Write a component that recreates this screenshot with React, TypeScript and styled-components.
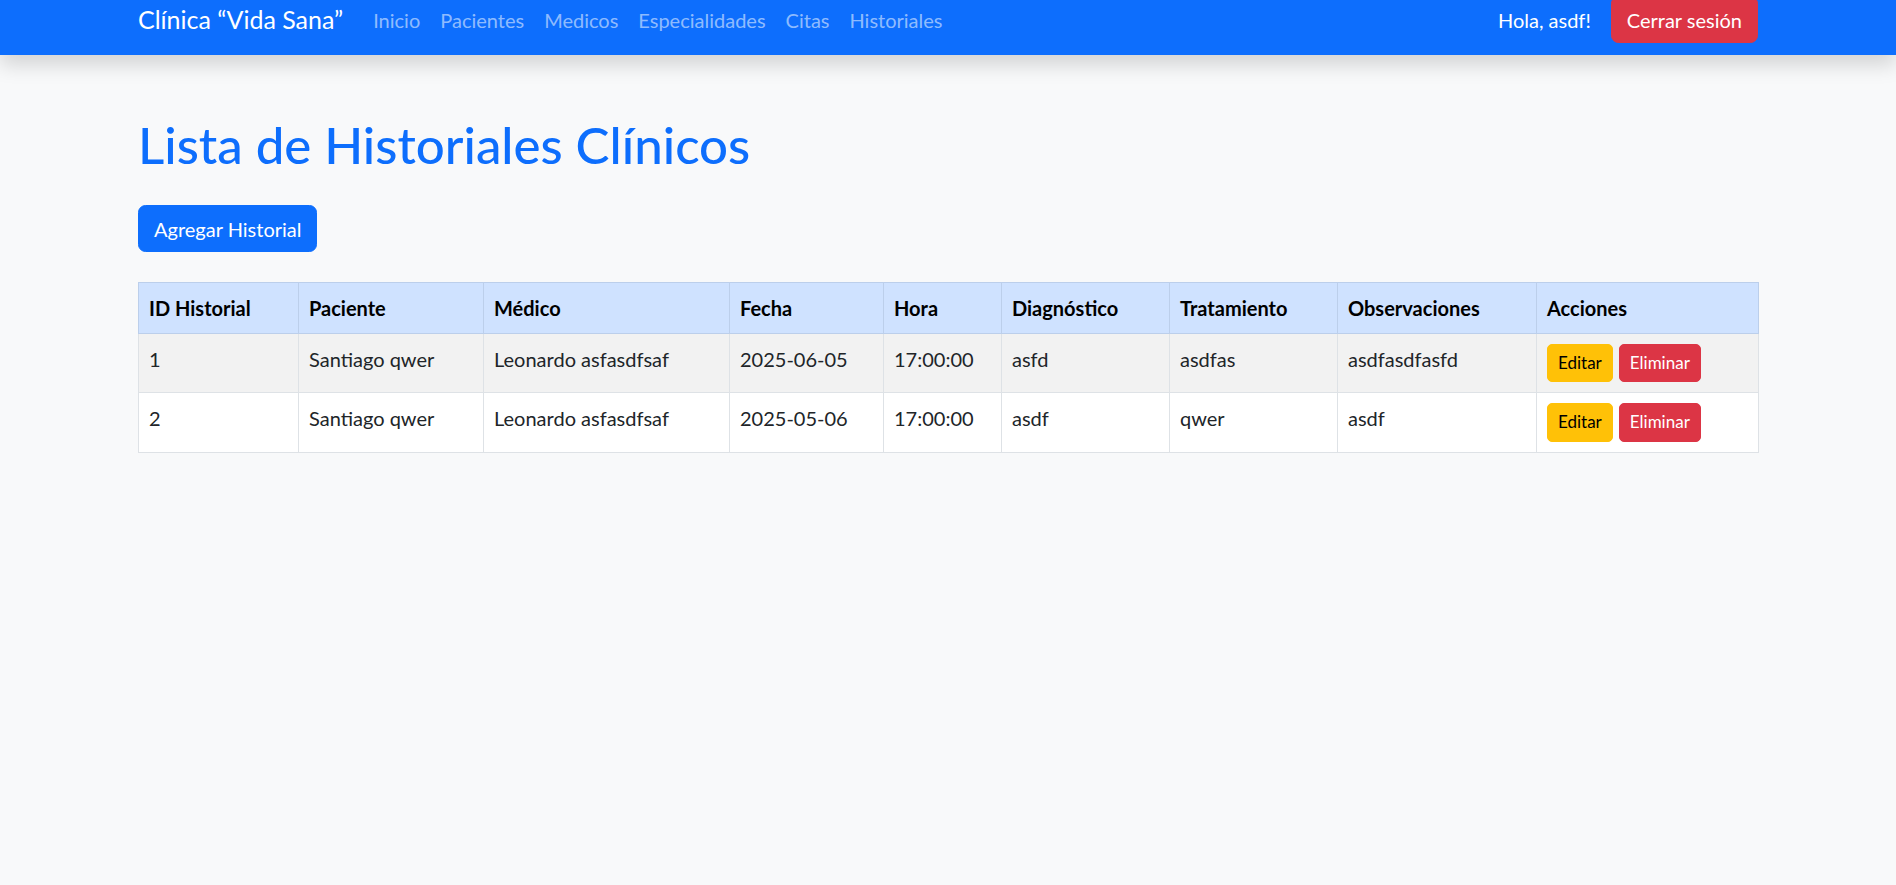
import React from "react";
import styled, { createGlobalStyle } from "styled-components";

const GlobalStyle = createGlobalStyle`
  html, body { margin: 0; padding: 0; }
  body {
    background: #f8f9fa;
    font-family: "Segoe UI", Lato, "Open Sans", sans-serif;
    font-size: 20px;
    line-height: 1.5;
    color: #212529;
  }
  * { box-sizing: border-box; }
`;

const NavBar = styled.nav`
  height: 55px;
  background: #0d6efd;
  box-shadow: 0 10px 20px rgba(0, 0, 0, 0.15);
  position: relative;
  z-index: 1;
`;

const NavInner = styled.div`
  width: 1620px;
  margin: 0 auto;
  height: 39px;
  display: flex;
  align-items: center;
`;

const Brand = styled.a`
  font-size: 25px;
  line-height: 37.5px;
  color: #fff;
  margin-right: 20px;
  text-decoration: none;
  white-space: nowrap;
`;

const NavLinks = styled.ul`
  list-style: none;
  margin: 0;
  padding: 0;
  display: flex;
  align-items: center;
`;

const NavLink = styled.a`
  display: block;
  padding: 0 10px;
  font-size: 20px;
  line-height: 30px;
  color: rgba(255, 255, 255, 0.55);
  text-decoration: none;
`;

const NavRight = styled.div`
  margin-left: auto;
  display: flex;
  align-items: center;
  gap: 20px;
`;

const Greeting = styled.span`
  color: #fff;
  font-size: 20px;
  line-height: 30px;
`;

const Button = styled.button<{ $variant: "primary" | "danger" | "warning"; $small?: boolean }>`
  font-family: inherit;
  font-size: ${(p) => (p.$small ? "17px" : "20px")};
  line-height: ${(p) => (p.$small ? "26.25px" : "30px")};
  padding: ${(p) => (p.$small ? "5px 10px" : "7.5px 15px")};
  border-radius: ${(p) => (p.$small ? "5px" : "7.5px")};
  border: 1px solid
    ${(p) => (p.$variant === "primary" ? "#0d6efd" : p.$variant === "danger" ? "#dc3545" : "#ffc107")};
  background: ${(p) => (p.$variant === "primary" ? "#0d6efd" : p.$variant === "danger" ? "#dc3545" : "#ffc107")};
  color: ${(p) => (p.$variant === "warning" ? "#000" : "#fff")};
  cursor: pointer;
  white-space: nowrap;
`;

const Main = styled.main`
  width: 1620px;
  margin: 0 auto;
  padding-top: 60px;
`;

const Title = styled.h1`
  margin: 0 0 30px;
  font-size: 51px;
  line-height: 60px;
  font-weight: 500;
  color: #0d6efd;
`;

const Toolbar = styled.div`
  display: flex;
  margin-bottom: 30px;
`;

const Table = styled.table`
  width: 1620px;
  table-layout: fixed;
  border-collapse: collapse;
  border: 1px solid #dee2e6;
`;

const HeadCell = styled.th`
  background: #cfe2ff;
  color: #000;
  font-weight: 700;
  text-align: left;
  vertical-align: top;
  padding: 10px;
  line-height: 30px;
  border: 1px solid #bccfeb;
`;

const Row = styled.tr<{ $striped?: boolean }>`
  background: ${(p) => (p.$striped ? "#f2f2f2" : "#fff")};
`;

const Cell = styled.td`
  padding: 10px;
  line-height: 30px;
  vertical-align: top;
  border: 1px solid #dee2e6;
  color: #212529;
`;

const Actions = styled.div`
  display: flex;
  gap: 6px;
`;

const columns: { label: string; width: number }[] = [
  { label: "ID Historial", width: 160 },
  { label: "Paciente", width: 185 },
  { label: "Médico", width: 246 },
  { label: "Fecha", width: 154 },
  { label: "Hora", width: 118 },
  { label: "Diagnóstico", width: 168 },
  { label: "Tratamiento", width: 168 },
  { label: "Observaciones", width: 199 },
  { label: "Acciones", width: 222 },
];

const rows = [
  ["1", "Santiago qwer", "Leonardo asfasdfsaf", "2025-06-05", "17:00:00", "asfd", "asdfas", "asdfasdfasfd"],
  ["2", "Santiago qwer", "Leonardo asfasdfsaf", "2025-05-06", "17:00:00", "asdf", "qwer", "asdf"],
];

const links = ["Inicio", "Pacientes", "Medicos", "Especialidades", "Citas", "Historiales"];

export default function App() {
  return (
    <>
      <GlobalStyle />
      <NavBar>
        <NavInner>
          <Brand href="#">Clínica “Vida Sana”</Brand>
          <NavLinks>
            {links.map((l) => (
              <li key={l}>
                <NavLink href="#">{l}</NavLink>
              </li>
            ))}
          </NavLinks>
          <NavRight>
            <Greeting>Hola, asdf!</Greeting>
            <Button $variant="danger">Cerrar sesión</Button>
          </NavRight>
        </NavInner>
      </NavBar>
      <Main>
        <Title>Lista de Historiales Clínicos</Title>
        <Toolbar>
          <Button $variant="primary">Agregar Historial</Button>
        </Toolbar>
        <Table>
          <colgroup>
            {columns.map((c) => (
              <col key={c.label} style={{ width: c.width }} />
            ))}
          </colgroup>
          <thead>
            <tr>
              {columns.map((c) => (
                <HeadCell key={c.label}>{c.label}</HeadCell>
              ))}
            </tr>
          </thead>
          <tbody>
            {rows.map((r, i) => (
              <Row key={r[0]} $striped={i % 2 === 0}>
                {r.map((v, j) => (
                  <Cell key={j}>{v}</Cell>
                ))}
                <Cell>
                  <Actions>
                    <Button $variant="warning" $small>
                      Editar
                    </Button>
                    <Button $variant="danger" $small>
                      Eliminar
                    </Button>
                  </Actions>
                </Cell>
              </Row>
            ))}
          </tbody>
        </Table>
      </Main>
    </>
  );
}
